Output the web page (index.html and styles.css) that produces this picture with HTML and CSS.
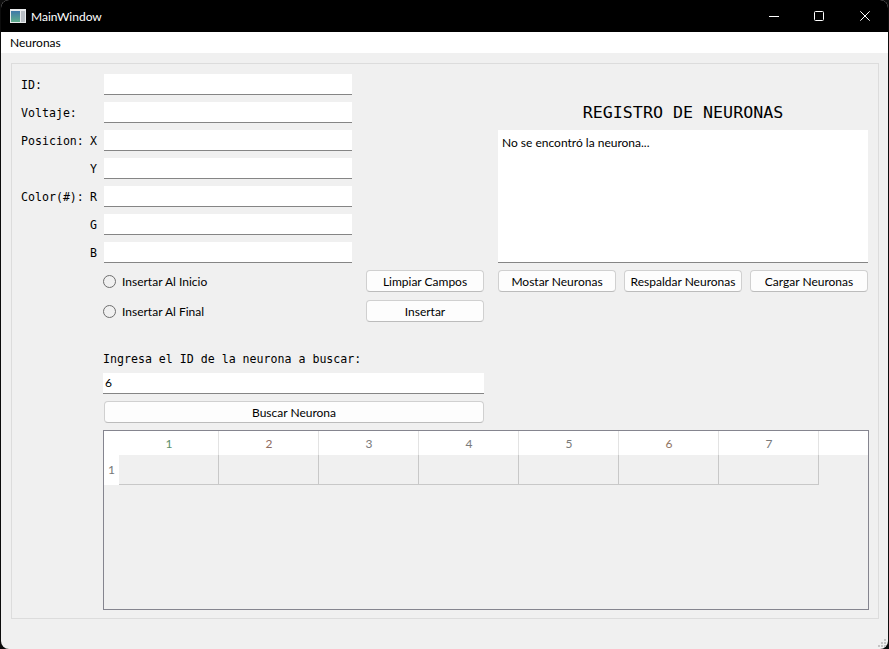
FILE: index.html
```html
<!DOCTYPE html>
<html lang="es">
<head>
<meta charset="utf-8">
<title>MainWindow</title>
<link rel="stylesheet" href="styles.css">
</head>
<body>
<div class="window">
  <header class="titlebar">
    <svg class="app-icon" width="16" height="14" viewBox="0 0 16 14"><defs><linearGradient id="pane" x1="0" y1="0" x2="0" y2="1"><stop offset="0" stop-color="#3f78a8"/><stop offset="1" stop-color="#5fae8c"/></linearGradient></defs><rect width="16" height="14" fill="#e8eaec"/><rect x="1" y="2" width="9" height="11" fill="url(#pane)"/><rect x="11" y="2" width="4" height="11" fill="#b9bec4"/></svg>
    <span class="app-title">MainWindow</span>
    <div class="controls">
      <span class="control"><svg class="glyph" width="10" height="10" viewBox="0 0 10 10"><path d="M1 5.5H11" stroke="#fff" fill="none"/></svg></span>
      <span class="control"><svg class="glyph" width="10" height="10" viewBox="0 0 10 10"><rect x="0.5" y="0.5" width="9" height="9" rx="1" stroke="#fff" fill="none"/></svg></span>
      <span class="control"><svg class="glyph" width="10" height="10" viewBox="0 0 10 10"><path d="M0.3 0.3L9.7 9.7M9.7 0.3L0.3 9.7" stroke="#fff" fill="none"/></svg></span>
    </div>
  </header>
  <nav class="menubar"><span class="menu-item">Neuronas</span></nav>
  <main class="content">
    <section class="group">
      <div class="top">
        <div class="left">
          <div class="field"><label class="mono lbl">ID:</label><div class="input"></div></div>
          <div class="field"><label class="mono lbl">Voltaje:</label><div class="input"></div></div>
          <div class="field"><label class="mono lbl split"><span>Posicion:</span><span>X</span></label><div class="input"></div></div>
          <div class="field"><label class="mono lbl split"><span></span><span>Y</span></label><div class="input"></div></div>
          <div class="field"><label class="mono lbl split"><span>Color(#):</span><span>R</span></label><div class="input"></div></div>
          <div class="field"><label class="mono lbl split"><span></span><span>G</span></label><div class="input"></div></div>
          <div class="field"><label class="mono lbl split"><span></span><span>B</span></label><div class="input"></div></div>
          <div class="option-row">
            <span class="radio-wrap"><span class="radio"></span>Insertar Al Inicio</span>
            <button class="btn btn-side">Limpiar Campos</button>
          </div>
          <div class="option-row">
            <span class="radio-wrap"><span class="radio"></span>Insertar Al Final</span>
            <button class="btn btn-side">Insertar</button>
          </div>
          <div class="search">
            <div class="mono search-label">Ingresa el ID de la neurona a buscar:</div>
            <div class="input input-wide">6</div>
            <button class="btn btn-full">Buscar Neurona</button>
          </div>
        </div>
        <div class="right">
          <h1 class="mono heading">REGISTRO DE NEURONAS</h1>
          <div class="textbox">No se encontró la neurona...</div>
          <div class="actions">
            <button class="btn btn-action">Mostar Neuronas</button>
            <button class="btn btn-action">Respaldar Neuronas</button>
            <button class="btn btn-action">Cargar Neuronas</button>
          </div>
        </div>
      </div>
      <div class="table">
        <div class="corner"></div>
        <div class="hcell c1">1</div><div class="hcell c2">2</div><div class="hcell c3">3</div><div class="hcell c4">4</div><div class="hcell c5">5</div><div class="hcell c6">6</div><div class="hcell c7">7</div><div class="hfill"></div>
        <div class="rowhead">1</div>
        <div class="cell"></div><div class="cell"></div><div class="cell"></div><div class="cell"></div><div class="cell"></div><div class="cell"></div><div class="cell"></div>
      </div>
    </section>
  </main>
  <svg class="grip" width="10" height="10" viewBox="0 0 10 10"><path d="M6 0h2v2H6zM3 3h2v2H3zM6 3h2v2H6zM0 6h2v2H0zM3 6h2v2H3zM6 6h2v2H6z" fill="#c4c4c4"/></svg>
</div>
</body>
</html>
```
FILE: styles.css
```css
* { box-sizing: border-box; }
html, body { margin: 0; height: 100%; }
body {
  background: #0c0c0c;
  overflow: hidden;
  font-family: "Lato", "Noto Sans", sans-serif;
  font-size: 12px;
  color: #000;
}
.window {
  position: relative;
  width: 887px;
  height: 649px;
  margin-left: 1px;
  background: #f0f0f0;
  border-radius: 8px;
  overflow: hidden;
  display: flex;
  flex-direction: column;
}
.titlebar {
  height: 32px;
  flex: none;
  background: #000;
  color: #fff;
  display: flex;
  align-items: center;
  padding-left: 9px;
}
.app-icon { flex: none; margin-right: 5px; }
.app-title { font-size: 12px; }
.controls { margin-left: auto; display: flex; }
.control {
  width: 46px;
  height: 32px;
  display: flex;
  align-items: center;
  justify-content: center;
}
.glyph { overflow: visible; }
.menubar {
  height: 21px;
  flex: none;
  background: #fff;
  display: flex;
  align-items: center;
  padding-left: 9px;
}
.content { padding: 10px 10px 0; }
.group {
  width: 868px;
  height: 556px;
  border: 1px solid #dcdcdc;
  padding: 10px 9px 8px 9px;
}
.mono { font-family: "DejaVu Sans Mono", "Liberation Mono", monospace; font-size: 11.6px; }
.top { display: flex; gap: 14px; }
.left { width: 463px; flex: none; display: flex; flex-direction: column; }
.right { width: 370px; flex: none; display: flex; flex-direction: column; }
.field {
  display: grid;
  grid-template-columns: 83px 248px;
  height: 21px;
  margin-bottom: 7px;
  align-items: center;
}
.lbl { display: block; }
.split { display: flex; justify-content: space-between; padding-right: 7px; }
.input {
  background: #fff;
  height: 21px;
  border-bottom: 1px solid #858585;
  padding-left: 2px;
  line-height: 20px;
}
.option-row {
  display: grid;
  grid-template-columns: 263px 118px;
  margin-left: 82px;
  height: 22px;
  margin-bottom: 8px;
  align-items: center;
}
.radio-wrap { display: flex; align-items: center; gap: 6px; }
.radio {
  width: 13px;
  height: 13px;
  border: 1px solid #6e6e6e;
  border-radius: 50%;
  background: #f0f0f0;
}
.btn {
  font: inherit;
  color: #000;
  background: #fdfdfd;
  border: 1px solid #d0d0d0;
  border-bottom-color: #bcbcbc;
  border-radius: 4px;
  padding: 0;
  height: 22px;
}
.btn-side { width: 118px; }
.search { margin-left: 82px; margin-top: 22px; }
.search-label { height: 21px; line-height: 14px; }
.input-wide { width: 381px; margin-bottom: 7px; }
.btn-full { display: block; margin-left: 1px; width: 380px; }
.heading {
  margin: 28px 0 0;
  height: 28px;
  font-size: 16.67px;
  font-weight: 400;
  text-align: center;
  line-height: 22px;
}
.textbox {
  height: 133px;
  background: #fff;
  border-bottom: 1px solid #858585;
  padding: 4px;
  line-height: 17px;
}
.actions { display: flex; gap: 8px; margin-top: 7px; }
.btn-action { width: 118px; }
.table {
  margin: 7px 0 0 82px;
  width: 766px;
  height: 180px;
  border: 1px solid #85858f;
  display: grid;
  grid-template-columns: 15px repeat(7, 100px) 1fr;
  grid-template-rows: 24px 30px;
  align-content: start;
}
.corner { background: #fff; }
.hcell {
  background: #fff;
  border-right: 1px solid #e3e3e3;
  text-align: center;
  line-height: 26px;
  padding-left: 1px;
  color: #7a7a7a;
}
.c1 { color: #5c8f6c; }
.c2 { color: #8f6c60; }
.c6 { color: #8f7460; }
.hfill { background: #fff; }
.rowhead {
  background: #fff;
  color: #777;
  line-height: 30px;
  text-align: center;
}
.cell { border-right: 1px solid #c8c8c8; border-bottom: 1px solid #c8c8c8; }
.grip { position: absolute; right: 0; bottom: 0; }
```
